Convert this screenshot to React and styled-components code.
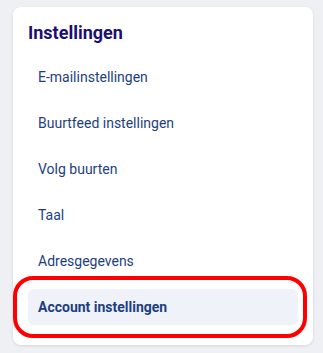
import React from "react";
import styled, { createGlobalStyle } from "styled-components";

const Global = createGlobalStyle`
  html, body { margin: 0; padding: 0; background: #eef0f4; }
  body { font-family: Roboto, "Noto Sans", sans-serif; }
`;

const Page = styled.div`
  padding: 7px 10px 0 13px;
  width: 323px;
  height: 353px;
  box-sizing: border-box;
`;

const Card = styled.div`
  width: 300px;
  box-sizing: border-box;
  background: #fff;
  border-radius: 8px;
  box-shadow: 0 1px 3px rgba(30, 40, 70, 0.12);
  padding: 14px 15px 20px;
`;

const Title = styled.h2`
  margin: 0 0 14px;
  font-size: 18px;
  line-height: 24px;
  font-weight: 700;
  color: #1b0f72;
`;

const List = styled.nav`
  display: flex;
  flex-direction: column;
  gap: 10px;
`;

const Item = styled.div`
  position: relative;
  height: 36px;
  display: flex;
  align-items: center;
  padding-left: 10px;
  border-radius: 6px;
  font-size: 14px;
  color: #1d3f80;
  font-weight: ${(p) => (p.$active ? 700 : 400)};
  background: ${(p) => (p.$active ? "#eff2f8" : "transparent")};
`;

const Highlight = styled.span`
  position: absolute;
  left: -15px;
  right: -9px;
  top: -13px;
  bottom: -13px;
  border: 4px solid #ff0000;
  border-radius: 20px;
  pointer-events: none;
`;

const items = [
  "E-mailinstellingen",
  "Buurtfeed instellingen",
  "Volg buurten",
  "Taal",
  "Adresgegevens",
  "Account instellingen",
];

export default function App() {
  return (
    <>
      <Global />
      <Page>
        <Card>
          <Title>Instellingen</Title>
          <List>
            {items.map((t, i) => {
              const active = i === items.length - 1;
              return (
                <Item key={t} $active={active}>
                  {t}
                  {active && <Highlight />}
                </Item>
              );
            })}
          </List>
        </Card>
      </Page>
    </>
  );
}
